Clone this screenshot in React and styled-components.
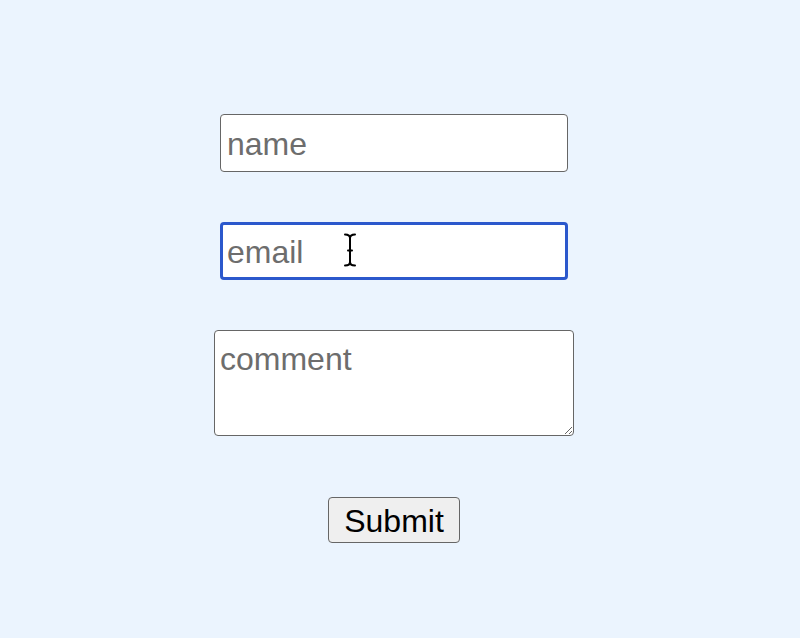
import React from 'react';
import styled, { createGlobalStyle } from 'styled-components';

const Global = createGlobalStyle`
  html, body {
    margin: 0;
    padding: 0;
    background: #ebf4fe;
  }
  body {
    font-family: "Liberation Sans", Arial, sans-serif;
  }
`;

const Page = styled.div`
  width: 788px;
  height: 638px;
  box-sizing: border-box;
  padding-top: 114px;
`;

const Form = styled.form`
  display: flex;
  flex-direction: column;
  align-items: center;
  gap: 50px;
`;

const Field = styled.div`
  position: relative;
`;

const TextInput = styled.input`
  box-sizing: border-box;
  width: 348px;
  height: 58px;
  margin: 0;
  padding: 3px ${p => (p.$focused ? 4 : 6)}px 0;
  font-family: "Liberation Sans", Arial, sans-serif;
  font-size: 32px;
  color: #111;
  background: #fff;
  border: ${p => (p.$focused ? '3px solid #2b58cc' : '1.5px solid #666')};
  border-radius: 4px;
  outline: none;
  &::placeholder {
    color: #6d6d6d;
  }
`;

const Comment = styled.textarea`
  box-sizing: border-box;
  width: 360px;
  height: 106px;
  margin: 0;
  padding: 10px 5px 6px;
  font-family: "Liberation Sans", Arial, sans-serif;
  font-size: 32px;
  line-height: 1.15;
  color: #111;
  background: #fff;
  border: 1.5px solid #666;
  border-radius: 4px;
  outline: none;
  &::placeholder {
    color: #6d6d6d;
  }
`;

const SubmitButton = styled.button`
  box-sizing: border-box;
  width: 132px;
  height: 46px;
  margin-top: 11px;
  padding: 2px 0 0;
  font-family: "Liberation Sans", Arial, sans-serif;
  font-size: 32px;
  color: #000;
  background: #efefef;
  border: 1.5px solid #666;
  border-radius: 4px;
`;

const Cursor = styled.svg`
  position: absolute;
  left: 123px;
  top: 11px;
  pointer-events: none;
`;

const IBeam = () => (
  <Cursor width="14" height="34" viewBox="0 0 14 34">
    <g fill="none" stroke="#000" strokeWidth="2" strokeLinecap="round">
      <path d="M2 1.5 Q7 1.5 7 5 Q7 1.5 12 1.5" />
      <path d="M7 5 V29" />
      <path d="M2 32.5 Q7 32.5 7 29 Q7 32.5 12 32.5" />
      <path d="M5 17.5 H9" />
    </g>
  </Cursor>
);

export default function App() {
  return (
    <Page>
      <Global />
      <Form onSubmit={e => e.preventDefault()}>
        <TextInput type="text" placeholder="name" />
        <Field>
          <TextInput type="email" placeholder="email" $focused />
          <IBeam />
        </Field>
        <Comment placeholder="comment" />
        <SubmitButton type="submit">Submit</SubmitButton>
      </Form>
    </Page>
  );
}
